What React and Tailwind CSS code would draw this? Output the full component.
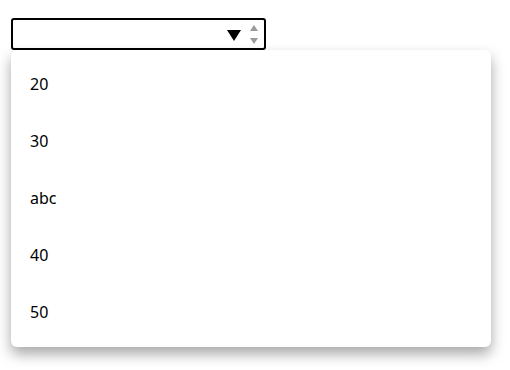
import React from 'react';

const options = ['20', '30', 'abc', '40', '50'];

export default function App() {
  return (
    <div className="min-h-[370px] bg-white pl-[11px] pt-[18px] font-['Noto_Sans','Open_Sans',sans-serif]">
      {/* Input with datalist arrow */}
      <div className="flex h-[32px] w-[255px] items-center justify-end rounded-[3px] border-2 border-black pr-[6px]">
        <svg width="14" height="11" viewBox="0 0 14 11" className="mr-[9px] mt-[2px]">
          <path d="M0 0H14L7 11Z" fill="#000" />
        </svg>
        <div className="flex flex-col gap-[7px]">
          <svg width="8" height="6" viewBox="0 0 8 6">
            <path d="M0 6L4 0L8 6Z" fill="#9a9a9a" />
          </svg>
          <svg width="8" height="6" viewBox="0 0 8 6">
            <path d="M0 0H8L4 6Z" fill="#9a9a9a" />
          </svg>
        </div>
      </div>

      {/* Options popup */}
      <div className="w-[480px] rounded-[6px] bg-white pt-[5px] pb-[7px] shadow-[0_7px_14px_rgba(0,0,0,0.35)]">
        {options.map((o) => (
          <div key={o} className="flex h-[57px] items-center pl-[19px] text-[16px] text-black">
            {o}
          </div>
        ))}
      </div>
    </div>
  );
}
